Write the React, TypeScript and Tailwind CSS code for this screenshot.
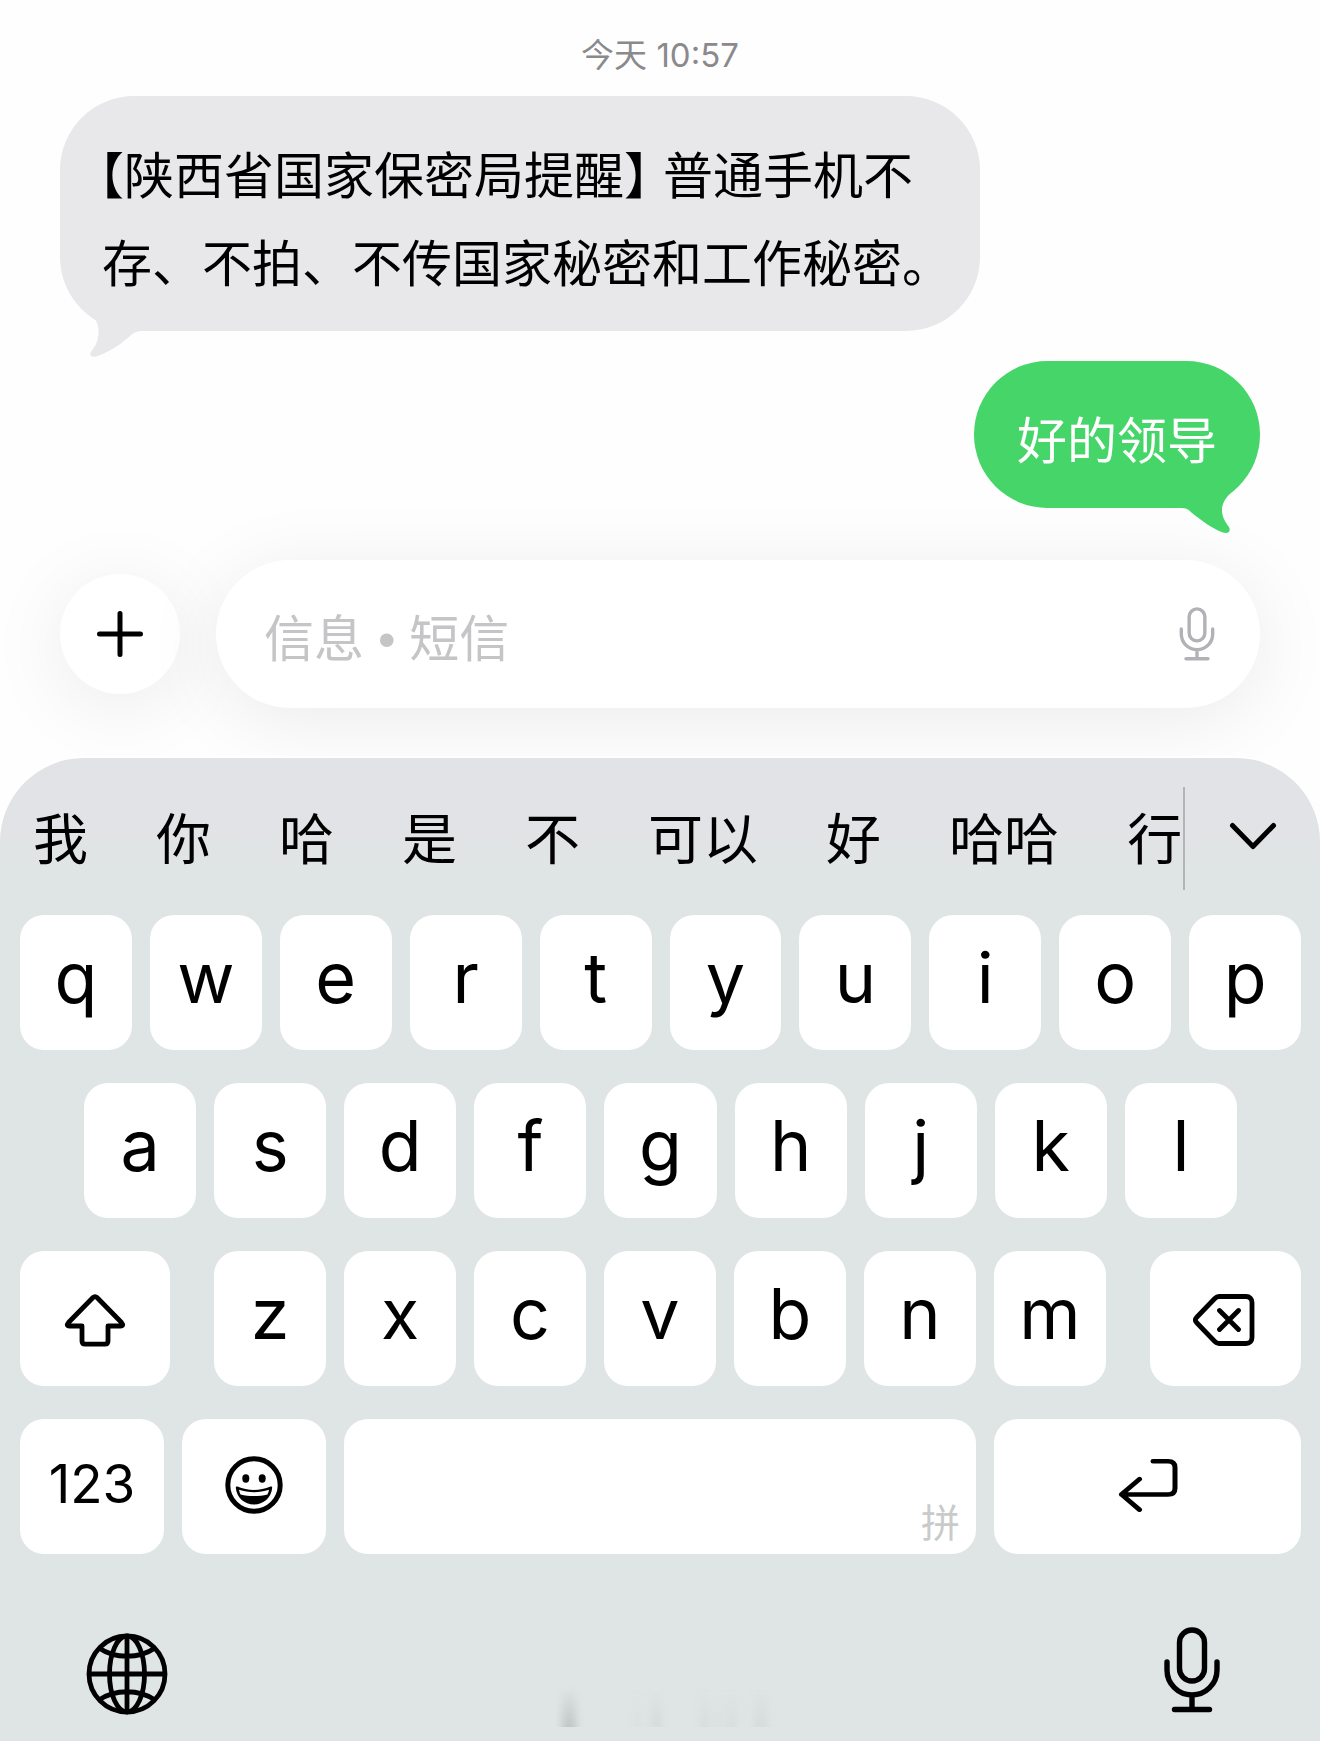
import type { ReactNode } from "react";

const candidates = ["我", "你", "哈", "是", "不", "可以", "好", "哈哈", "行"];
const topRow = ["q", "w", "e", "r", "t", "y", "u", "i", "o", "p"];
const homeRow = ["a", "s", "d", "f", "g", "h", "j", "k", "l"];
const bottomRow = ["z", "x", "c", "v", "b", "n", "m"];

function Key({ children, label, className = "" }: { children?: ReactNode; label: string; className?: string }) {
  return (
    <button type="button" aria-label={label} className={`flex h-[135px] items-center justify-center rounded-3xl bg-white ${className}`}>
      {children}
    </button>
  );
}

function LetterKey({ letter }: { letter: string }) {
  return (
    <Key label={letter} className="min-w-0 flex-1 pb-2.5 text-[70px] leading-none">
      {letter}
    </Key>
  );
}

function MicIcon({ className }: { className: string }) {
  return (
    <svg viewBox="0 0 56 86" fill="none" stroke="currentColor" strokeWidth="5.400" strokeLinecap="round" className={className}>
      <rect x="15.5" y="3" width="25" height="51" rx="12.5" />
      <path d="M3 35v8a25 25 0 0 0 50 0v-8M28 68v14M10.500 82.500h35" />
    </svg>
  );
}

function GlobeIcon() {
  return (
    <svg viewBox="0 0 82 82" fill="none" stroke="currentColor" strokeWidth="4.800" className="size-[82px]">
      <circle cx="41" cy="41" r="38" />
      <ellipse cx="41" cy="41" rx="17.500" ry="38" />
      <path d="M41 3v76M3 41h76M13 15c16 11 40 11 56 0M13 67c16-11 40-11 56 0" />
    </svg>
  );
}

export default function App() {
  return (
    <main className="flex min-h-screen flex-col overflow-hidden bg-[#fefefe] font-['Inter','Noto_Sans_CJK_SC',sans-serif] text-black">
      {/* Conversation */}
      <section className="flex flex-col px-[60px] pt-[35px]">
        <time className="text-center text-[33px] leading-10 text-[#8a8a8d]">今天 10:57</time>

        <div className="relative mt-[21px] w-full max-w-[920px] self-start rounded-[74px] bg-[#e8e8ea] pt-9 pr-2 pb-[23px] pl-[42px]">
          <p className="text-[50px] leading-[88px]">
            <span className="block -indent-[3px] [font-feature-settings:'halt']">【陕西省国家保密局提醒】 普通手机不</span>
            <span className="block">存、不拍、不传国家秘密和工作秘密。</span>
          </p>
          <svg viewBox="0 0 60 52" fill="#e8e8ea" className="absolute -bottom-[27px] left-7 h-[52px] w-[60px]">
            <path d="M5 11C10 16 11 22 10.500 27 10 34 8 40 3.500 45 .5 49 3 51.500 8 50.500 20 47 32 39 42 30 46 26 50 25 54 25V10Z" />
          </svg>
        </div>

        <div className="relative mt-[30px] self-end rounded-full bg-[#45d568] px-[43px] pt-9 pb-[23px] text-white">
          <p className="text-[50px] leading-[88px]">好的领导</p>
          <svg viewBox="0 0 60 56" fill="#45d568" className="absolute right-6 -bottom-7 h-14 w-[60px]">
            <path d="M58 10C52 15 47 21 46 28 45.500 36 49 42 53 47 55 51 53 54 47 52.500 35 48 25 40 16 33 13 30 11 28 6 28V10Z" />
          </svg>
        </div>
      </section>

      {/* Composer */}
      <form className="mt-[52px] flex items-center gap-9 px-[60px]">
        <button type="button" aria-label="添加" className="flex size-[120px] shrink-0 items-center justify-center rounded-full bg-white shadow-[0_12px_80px_rgba(0,0,0,0.08)]">
          <svg viewBox="0 0 48 48" stroke="currentColor" strokeWidth="5" strokeLinecap="round" className="size-12">
            <path d="M24 3.500v41M3.500 24h41" />
          </svg>
        </button>
        <div className="flex h-[148px] min-w-0 flex-1 items-center rounded-full bg-white pr-[45px] pl-12 shadow-[0_12px_80px_rgba(0,0,0,0.08)]">
          <input
            type="text"
            aria-label="信息"
            placeholder="信息 • 短信"
            className="h-full min-w-0 flex-1 bg-transparent pt-3 font-['Liberation_Sans','Noto_Sans_CJK_SC',sans-serif] text-[50px] outline-none placeholder:text-[#c5c5c7]"
          />
          <button type="button" aria-label="语音输入" className="text-[#b1b2b6]">
            <MicIcon className="h-[54px] w-9" />
          </button>
        </div>
      </form>

      {/* Keyboard */}
      <section className="relative mt-[50px] flex flex-1 flex-col rounded-t-[84px] bg-[#dfe5e4] bg-[linear-gradient(#e2e3e6_0px,#e2e3e6_70px,#dfe5e4_120px)] pr-[19px] pl-5 shadow-[0_-2px_0_#fff]">
        <div className="mt-[29px] flex h-[103px] items-center">
          <div className="flex h-full min-w-0 flex-1 items-center gap-[68px] overflow-hidden border-r-2 border-[#b2b4b7] pt-0.5 pl-[13px]">
            {candidates.map((word) => (
              <button key={word} type="button" className="shrink-0 text-[55px] leading-none whitespace-nowrap">
                {word}
              </button>
            ))}
          </div>
          <button type="button" aria-label="展开候选" className="flex w-[116px] justify-center pb-1.5 pl-5">
            <svg viewBox="0 0 48 30" fill="none" stroke="currentColor" strokeWidth="5" strokeLinecap="round" strokeLinejoin="round" className="h-[30px] w-12">
              <path d="M3.500 4.500 24 25.500 44.500 4.500" />
            </svg>
          </button>
        </div>

        <div className="mt-[25px] flex flex-col gap-[33px]">
          <div className="flex gap-[18px]">
            {topRow.map((letter) => <LetterKey key={letter} letter={letter} />)}
          </div>
          <div className="flex gap-[18px] px-16">
            {homeRow.map((letter) => <LetterKey key={letter} letter={letter} />)}
          </div>
          <div className="flex gap-11">
            <Key label="上档" className="w-[150px] shrink-0 pt-0.5">
              <svg viewBox="0 0 62 54" fill="none" stroke="currentColor" strokeWidth="4.800" strokeLinejoin="round" className="h-[54px] w-[62px]">
                <path d="M29 4.500 4.500 29.500C2.500 31.800 3.200 33 5.500 33H18v15c0 2 1.200 3.200 3.200 3.200h19.600c2 0 3.200-1.200 3.200-3.200V33h12.500c2.300 0 3-1.200 1-3.500L33 4.500c-1.300-1.300-2.700-1.300-4 0Z" />
              </svg>
            </Key>
            <div className="flex min-w-0 flex-1 gap-[18px]">
              {bottomRow.map((letter) => <LetterKey key={letter} letter={letter} />)}
            </div>
            <Key label="删除" className="w-[151px] shrink-0 pt-0.5 pr-1">
              <svg viewBox="0 0 62 54" fill="none" stroke="currentColor" strokeWidth="4.800" strokeLinecap="round" strokeLinejoin="round" className="h-[54px] w-[62px]">
                <path d="M26 3.500h27c3.800 0 6 2.200 6 6v35c0 3.800-2.200 6-6 6H26c-2 0-3-.8-4.200-2L3.500 29.500c-1.500-1.700-1.500-3.300 0-5L21.800 5.500c1.200-1.200 2.200-2 4.200-2ZM26.500 17.500l19 19M45.500 17.500l-19 19" />
              </svg>
            </Key>
          </div>
          <div className="flex gap-[18px]">
            <Key label="123" className="w-36 shrink-0 pb-1 text-[53px] leading-none">123</Key>
            <Key label="表情" className="w-36 shrink-0 pb-1">
              <svg viewBox="0 0 58 58" className="size-[58px]">
                <circle cx="29" cy="29" r="26.200" fill="none" stroke="currentColor" strokeWidth="5" />
                <ellipse cx="20.800" cy="22.500" rx="3.500" ry="4.200" />
                <ellipse cx="37.200" cy="22.500" rx="3.500" ry="4.200" />
                <path d="M12.500 30.500c10.500 4.500 22.500 4.500 33 0 1-.4 1.800.2 1.700 1.300C46.200 42 38.500 48.500 29 48.500S11.800 42 10.800 31.800c-.1-1.100.7-1.700 1.700-1.300Z" />
                <path d="M14 33.800c9.500 3.200 20.500 3.200 30 0-.3 1.900-.8 3.300-1.500 4.600-8.500 2.200-18.500 2.200-27 0-.7-1.300-1.200-2.700-1.500-4.600Z" fill="#fff" />
              </svg>
            </Key>
            <Key label="空格" className="min-w-0 flex-1">
              <span className="ml-auto self-end pr-4 pb-3 text-[39px] leading-none text-[#c9cbcb]">拼</span>
            </Key>
            <Key label="换行" className="w-[307px] shrink-0 pb-1">
              <svg viewBox="0 0 60 54" fill="none" stroke="currentColor" strokeWidth="5" strokeLinecap="round" strokeLinejoin="round" className="h-[54px] w-[60px]">
                <path d="M35 3.500h15c4.500 0 7 2.500 7 7v23c0 4.500-2.500 7-7 7H3.500M21.500 23.500 3.500 40.500 21.500 57.500" transform="translate(0 0) scale(1 .9)" />
              </svg>
            </Key>
          </div>
        </div>

        <div className="mt-[73px] flex items-start justify-between pr-[81px] pl-[66px]">
          <button type="button" aria-label="切换键盘" className="pt-1.5">
            <GlobeIcon />
          </button>
          <svg viewBox="0 0 220 44" className="mt-[60px] h-11 w-[220px]" aria-hidden="true">
            <defs>
              <linearGradient id="smudge" x1="0" y1="0" x2="0" y2="1">
                <stop offset="0" stopColor="#9fa4a4" stopOpacity="0" />
                <stop offset="1" stopColor="#9fa4a4" stopOpacity="0.500" />
              </linearGradient>
              <filter id="soften" x="-20%" y="-20%" width="140%" height="140%">
                <feGaussianBlur stdDeviation="4 0" />
              </filter>
            </defs>
            <g fill="url(#smudge)" filter="url(#soften)">
              <rect x="6" width="14" height="40" />
              <rect x="78" y="2" width="6" height="38" opacity="0.200" />
              <rect x="96" width="9" height="40" opacity="0.400" />
              <rect x="145" y="2" width="8" height="38" opacity="0.300" />
              <rect x="160" y="2" width="6" height="38" opacity="0.200" />
              <rect x="172" y="2" width="8" height="38" opacity="0.300" />
              <rect x="198" y="2" width="14" height="38" opacity="0.300" />
            </g>
          </svg>
          <button type="button" aria-label="听写">
            <MicIcon className="h-[86px] w-14" />
          </button>
        </div>
      </section>
    </main>
  );
}
